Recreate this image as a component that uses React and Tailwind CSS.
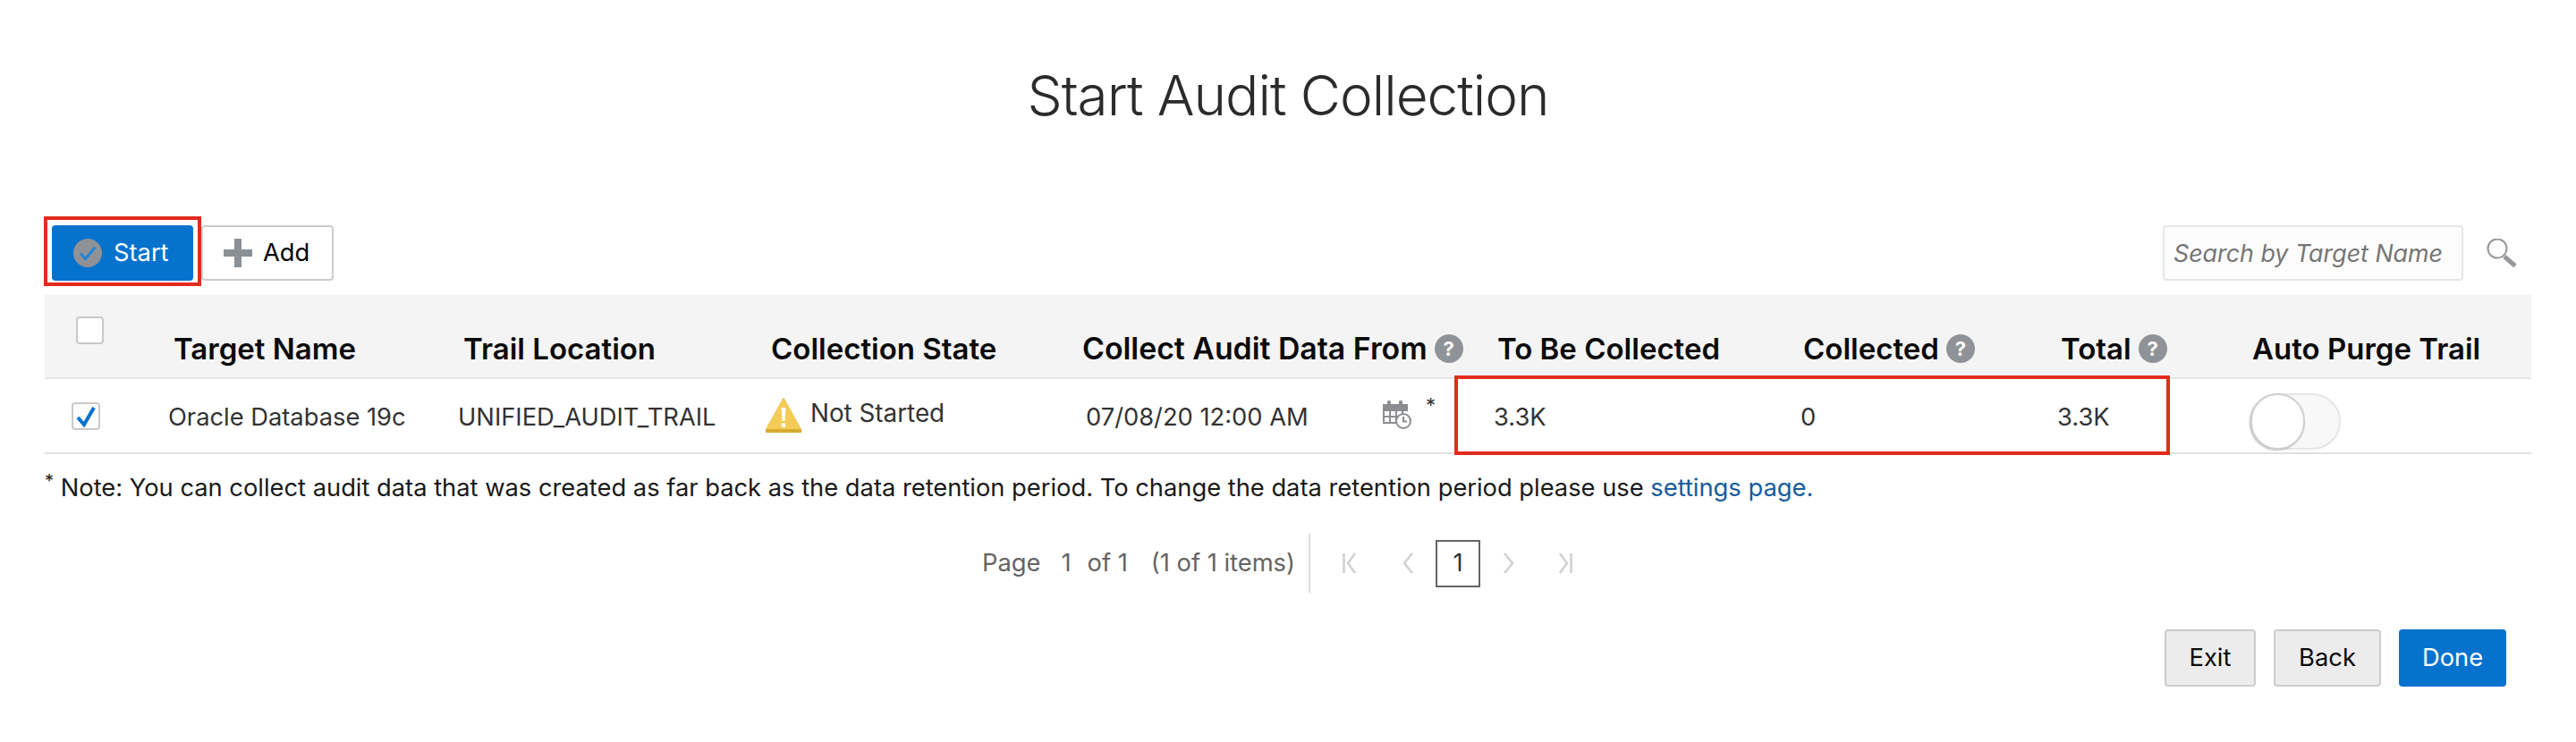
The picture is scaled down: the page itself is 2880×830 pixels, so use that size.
const font = { fontFamily: "Inter, 'Liberation Sans', sans-serif" };

function Help() {
  return (
    <span className="inline-flex w-[32px] h-[32px] shrink-0 items-center justify-center rounded-full bg-[#8f9296] text-white text-[22px] font-bold leading-none">?</span>
  );
}

function StartIcon() {
  return (
    <svg width="32" height="32" viewBox="0 0 32 32" className="shrink-0">
      <circle cx="16" cy="16" r="16" fill="#8f9296" />
      <path d="M8 16.5l5.5 6L24.5 9.5" fill="none" stroke="#1f86dc" strokeWidth="3" />
    </svg>
  );
}

function PlusIcon() {
  return (
    <svg width="32" height="32" viewBox="0 0 32 32" className="shrink-0">
      <path d="M12 0h8v12h12v8H20v12h-8V20H0v-8h12z" fill="#8b9094" />
    </svg>
  );
}

function Warning() {
  return (
    <svg width="40" height="40" viewBox="0 0 40 40" className="shrink-0">
      <path d="M20 0L40 36v4H0v-4z" fill="#f4cb55" />
      <path d="M0 36h40v4H0z" fill="#d7aa35" />
      <path d="M17.5 12h5l-1 15h-3z" fill="#fff" />
      <rect x="17.8" y="29.5" width="4.4" height="4.4" fill="#fff" />
    </svg>
  );
}

function CalendarClock() {
  return (
    <svg width="32" height="32" viewBox="0 0 32 32" className="shrink-0">
      <path d="M0 4h28v8H0z" fill="#8b8d90" />
      <rect x="5" y="0" width="4" height="6" rx="1.5" fill="#8b8d90" />
      <rect x="18" y="0" width="4" height="6" rx="1.5" fill="#8b8d90" />
      <path d="M1 11v14h18M1 18h16M8 11v14M15 11v12M22 11v6M1 11h26" fill="none" stroke="#8b8d90" strokeWidth="2" />
      <circle cx="23" cy="23" r="8" fill="#fff" stroke="#8b8d90" strokeWidth="2" />
      <path d="M23 18v5.500h4" fill="none" stroke="#8b8d90" strokeWidth="2" />
    </svg>
  );
}

function SearchIcon() {
  return (
    <svg width="34" height="32" viewBox="0 0 34 32">
      <circle cx="12" cy="11" r="10.500" fill="none" stroke="#96989b" strokeWidth="2" />
      <path d="M20 20l12 10.500" stroke="#96989b" strokeWidth="5" />
    </svg>
  );
}

function Pager({ d, w }) {
  return (
    <svg width={w} height="24" viewBox={`0 0 ${w} 24`} className="shrink-0">
      <path d={d} fill="none" stroke="#cfd0d1" strokeWidth="2.500" />
    </svg>
  );
}

const gridCols = "grid grid-cols-[134px_324px_345px_348px_463px_343px_288px_214px_321px]";
const hCell = "pl-[10px] pt-[40px] h-[80px] flex items-center gap-[8px] text-[33px] leading-[40px] font-semibold text-[#0a0a0a] whitespace-nowrap";
const rCell = "pt-[23px] text-[27.3px] leading-[40px] text-[#333333] whitespace-nowrap";

export default function App() {
  return (
    <div style={font} className="w-[2880px] h-[830px] bg-white overflow-hidden">
      <h1 className="h-[242px] pt-[70px] text-center text-[62px] leading-[74px] tracking-[-1px] font-light text-[#2b2b2b]">Start Audit Collection</h1>

      <div className="mx-[50px] flex items-start">
        <div className="-ml-px border-[4px] border-[#e32b1c] pt-[6px] pb-[2px] px-[5px]">
          <button className="w-[158px] h-[62px] rounded-[4px] bg-[#0572ce] text-white text-[27.3px] flex items-center pl-[24px] gap-[13px]">
            <StartIcon />
            <span className="pt-px">Start</span>
          </button>
        </div>
        <button className="mt-[10px] w-[148px] h-[62px] rounded-[4px] border-2 border-[#cccccc] bg-white text-black text-[27.3px] flex items-center pl-[23px] gap-[13px]">
          <PlusIcon />
          <span className="pt-px -ml-px">Add</span>
        </button>
        <input
          readOnly
          placeholder="Search by Target Name"
          className="mt-[10px] ml-auto w-[336px] h-[62px] rounded-[4px] border-2 border-[#e6e6e6] bg-[#fcfcfc] px-[10px] text-[26.8px] italic text-[#666] placeholder:text-[#757575] outline-none"
        />
        <div className="mt-[25px] ml-[26px] mr-[16px]">
          <SearchIcon />
        </div>
      </div>

      <div className="mx-[50px] mt-[10px]">
        <div className={`${gridCols} h-[94px] bg-[#f4f4f4] border-b-2 border-[#e5e5e5]`}>
          <div className="pl-[35px] pt-[24px]">
            <div className="w-[31px] h-[31px] rounded-[4px] border-2 border-[#c9c9c9] bg-white" />
          </div>
          <div className={hCell}>Target Name</div>
          <div className={hCell}>Trail Location</div>
          <div className={`${hCell} -ml-px`}>Collection State</div>
          <div className={`${hCell} -ml-px`}><span className="text-[33.8px]">Collect Audit Data From</span><Help /></div>
          <div className={hCell}>To Be Collected</div>
          <div className={`${hCell} -ml-px`}>Collected<Help /></div>
          <div className={`${hCell} -ml-px`}>Total<Help /></div>
          <div className={`${hCell} -ml-px`}>Auto Purge Trail</div>
        </div>

        <div className={`${gridCols} relative h-[84px] border-b-2 border-[#e0e0e0]`}>
          <div className="pl-[30px] pt-[26px]">
            <div className="w-[32px] h-[31px] rounded-[4px] border-2 border-[#c9c9c9] bg-[#fcfcfc] flex items-center justify-center">
              <svg width="22" height="24" viewBox="0 0 22 24"><path d="M2 13l7 8L20 2" fill="none" stroke="#0572ce" strokeWidth="4" /></svg>
            </div>
          </div>
          <div className={`${rCell} pl-[4px]`}>Oracle Database 19c</div>
          <div className={`${rCell} pl-[4px]`}>UNIFIED_AUDIT_TRAIL</div>
          <div className="pl-[3px] pt-[20px] flex items-start gap-[10px]">
            <Warning />
            <span className="text-[27.8px] leading-[37px] text-[#333333] whitespace-nowrap">Not Started</span>
          </div>
          <div className="flex items-start">
            <div className={`${rCell} pl-[13px] w-[345px]`}>07/08/20 12:00 AM</div>
            <div className="pt-[24px]"><CalendarClock /></div>
            <div className="ml-[16px] pt-[16px] text-[22px] leading-[26px] text-[#333333]">*</div>
          </div>
          <div className={`${rCell} pl-[6px]`}>3.3K</div>
          <div className={`${rCell} pl-[6px]`}>0</div>
          <div className={`${rCell} pl-[5px]`}>3.3K</div>
          <div className="pl-[7px] pt-[16px]">
            <div className="relative w-[101px] h-[63px] rounded-full border-2 border-[#e6e6e6] bg-[#f8f8f8]">
              <div className="absolute -left-[2px] -top-[2px] w-[61px] h-[63px] rounded-full border-2 border-[#cfcfcf] bg-white shadow-[-1px_1px_2px_rgba(0,0,0,0.25)]" />
            </div>
          </div>
          <div className="absolute left-[1576px] -top-[4px] w-[800px] h-[89px] border-[4px] border-[#e32b1c] pointer-events-none" />
        </div>

        <p className="mt-[18px] h-[40px] text-[27.3px] leading-[40px] text-[#1a1a1a] whitespace-nowrap">
          <sup className="text-[20px]">*</sup> Note: You can collect audit data that was created as far back as the data retention period. To change the data retention period please use <a className="text-[#145c9e]">settings page.</a>
        </p>

        <div className="mt-[31px] pl-[1048px] flex items-center h-[66px] text-[27.3px] text-[#646464] whitespace-nowrap">
          <span>Page</span>
          <span className="ml-[23px]">1</span>
          <span className="ml-[18px]">of 1</span>
          <span className="ml-[26px]">(1 of 1 items)</span>
          <span className="ml-[15px] w-[2px] h-[66px] bg-[#dedede]" />
          <span className="ml-[36px]"><Pager w={16} d="M1.500 1v22M14 1L6 12l8 11" /></span>
          <span className="ml-[50px]"><Pager w={13} d="M12 1L3 12l9 11" /></span>
          <span className="ml-[25px] w-[50px] h-[53px] border-2 border-[#646464] flex items-center justify-center text-[#333333]">1</span>
          <span className="ml-[26px]"><Pager w={13} d="M1 1l9 11L1 23" /></span>
          <span className="ml-[48px]"><Pager w={16} d="M2 1l8 11-8 11M14.500 1v22" /></span>
        </div>

        <div className="mt-[41px] mr-[28px] flex justify-end gap-[20px] text-[27.3px]">
          <button className="w-[102px] h-[64px] rounded-[4px] border-2 border-[#cccccc] bg-[#ececec] text-[#0a0a0a]">Exit</button>
          <button className="w-[120px] h-[64px] rounded-[4px] border-2 border-[#cccccc] bg-[#ececec] text-[#0a0a0a]">Back</button>
          <button className="w-[120px] h-[64px] rounded-[4px] bg-[#0572ce] text-white">Done</button>
        </div>
      </div>
    </div>
  );
}
